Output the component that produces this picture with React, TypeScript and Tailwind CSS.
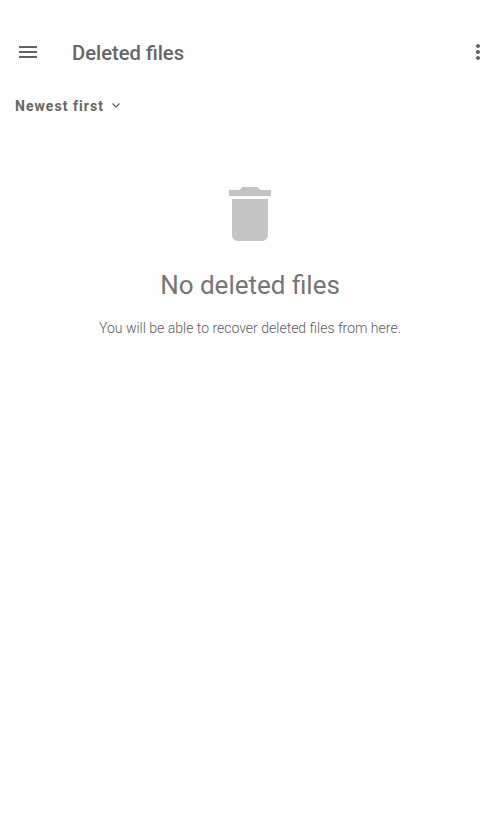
export default function App() {
  return (
    <main className="flex h-[833px] w-full flex-col bg-[#fefefe] font-['Roboto',sans-serif] text-[#616161]">
      <header className="mt-6 flex h-14 shrink-0 items-center pr-[10px] pl-4">
        <button aria-label="Menu" className="size-6">
          <svg viewBox="0 0 24 24" className="size-6" fill="currentColor"><path d="M3 18h18v-2H3v2zm0-5h18v-2H3v2zm0-7v2h18V6H3z" /></svg>
        </button>
        <h1 className="ml-8 flex-1 pt-0.5 text-[20.2px] leading-7 font-medium text-[#666]">Deleted files</h1>
        <button aria-label="More options" className="size-6">
          <svg viewBox="0 0 24 24" className="size-6" fill="currentColor"><path d="M12 8c1.1 0 2-.9 2-2s-.9-2-2-2-2 .9-2 2 .9 2 2 2zm0 2c-1.1 0-2 .9-2 2s.9 2 2 2 2-.9 2-2-.9-2-2-2zm0 6c-1.1 0-2 .9-2 2s.9 2 2 2 2-.9 2-2-.9-2-2-2z" /></svg>
        </button>
      </header>
      <button className="mt-4 ml-[15px] flex h-5 items-center self-start text-[14px] font-bold tracking-[1.05px] text-[#666]">
        Newest first
        <svg viewBox="0 0 16 16" className="mb-0.5 ml-1 size-4" fill="none" stroke="currentColor" strokeWidth="1.2"><path d="m4.5 6.5 3.5 3.5 3.5-3.5" /></svg>
      </button>
      <section className="mt-[62px] flex flex-col items-center text-[#757575]">
        <svg viewBox="0 0 24 24" className="size-[72px] text-[#c4c4c4]" fill="currentColor"><path d="M6 19c0 1.1.9 2 2 2h8c1.1 0 2-.9 2-2V7H6v12zM19 4h-3.5l-1-1h-5l-1 1H5v2h14V4z" /></svg>
        <h2 className="mt-[19px] text-[26px] leading-8">No deleted files</h2>
        <p className="mt-[17px] text-[14px] leading-5 font-light text-[#5c5c5c]">You will be able to recover deleted files from here.</p>
      </section>
    </main>
  );
}
